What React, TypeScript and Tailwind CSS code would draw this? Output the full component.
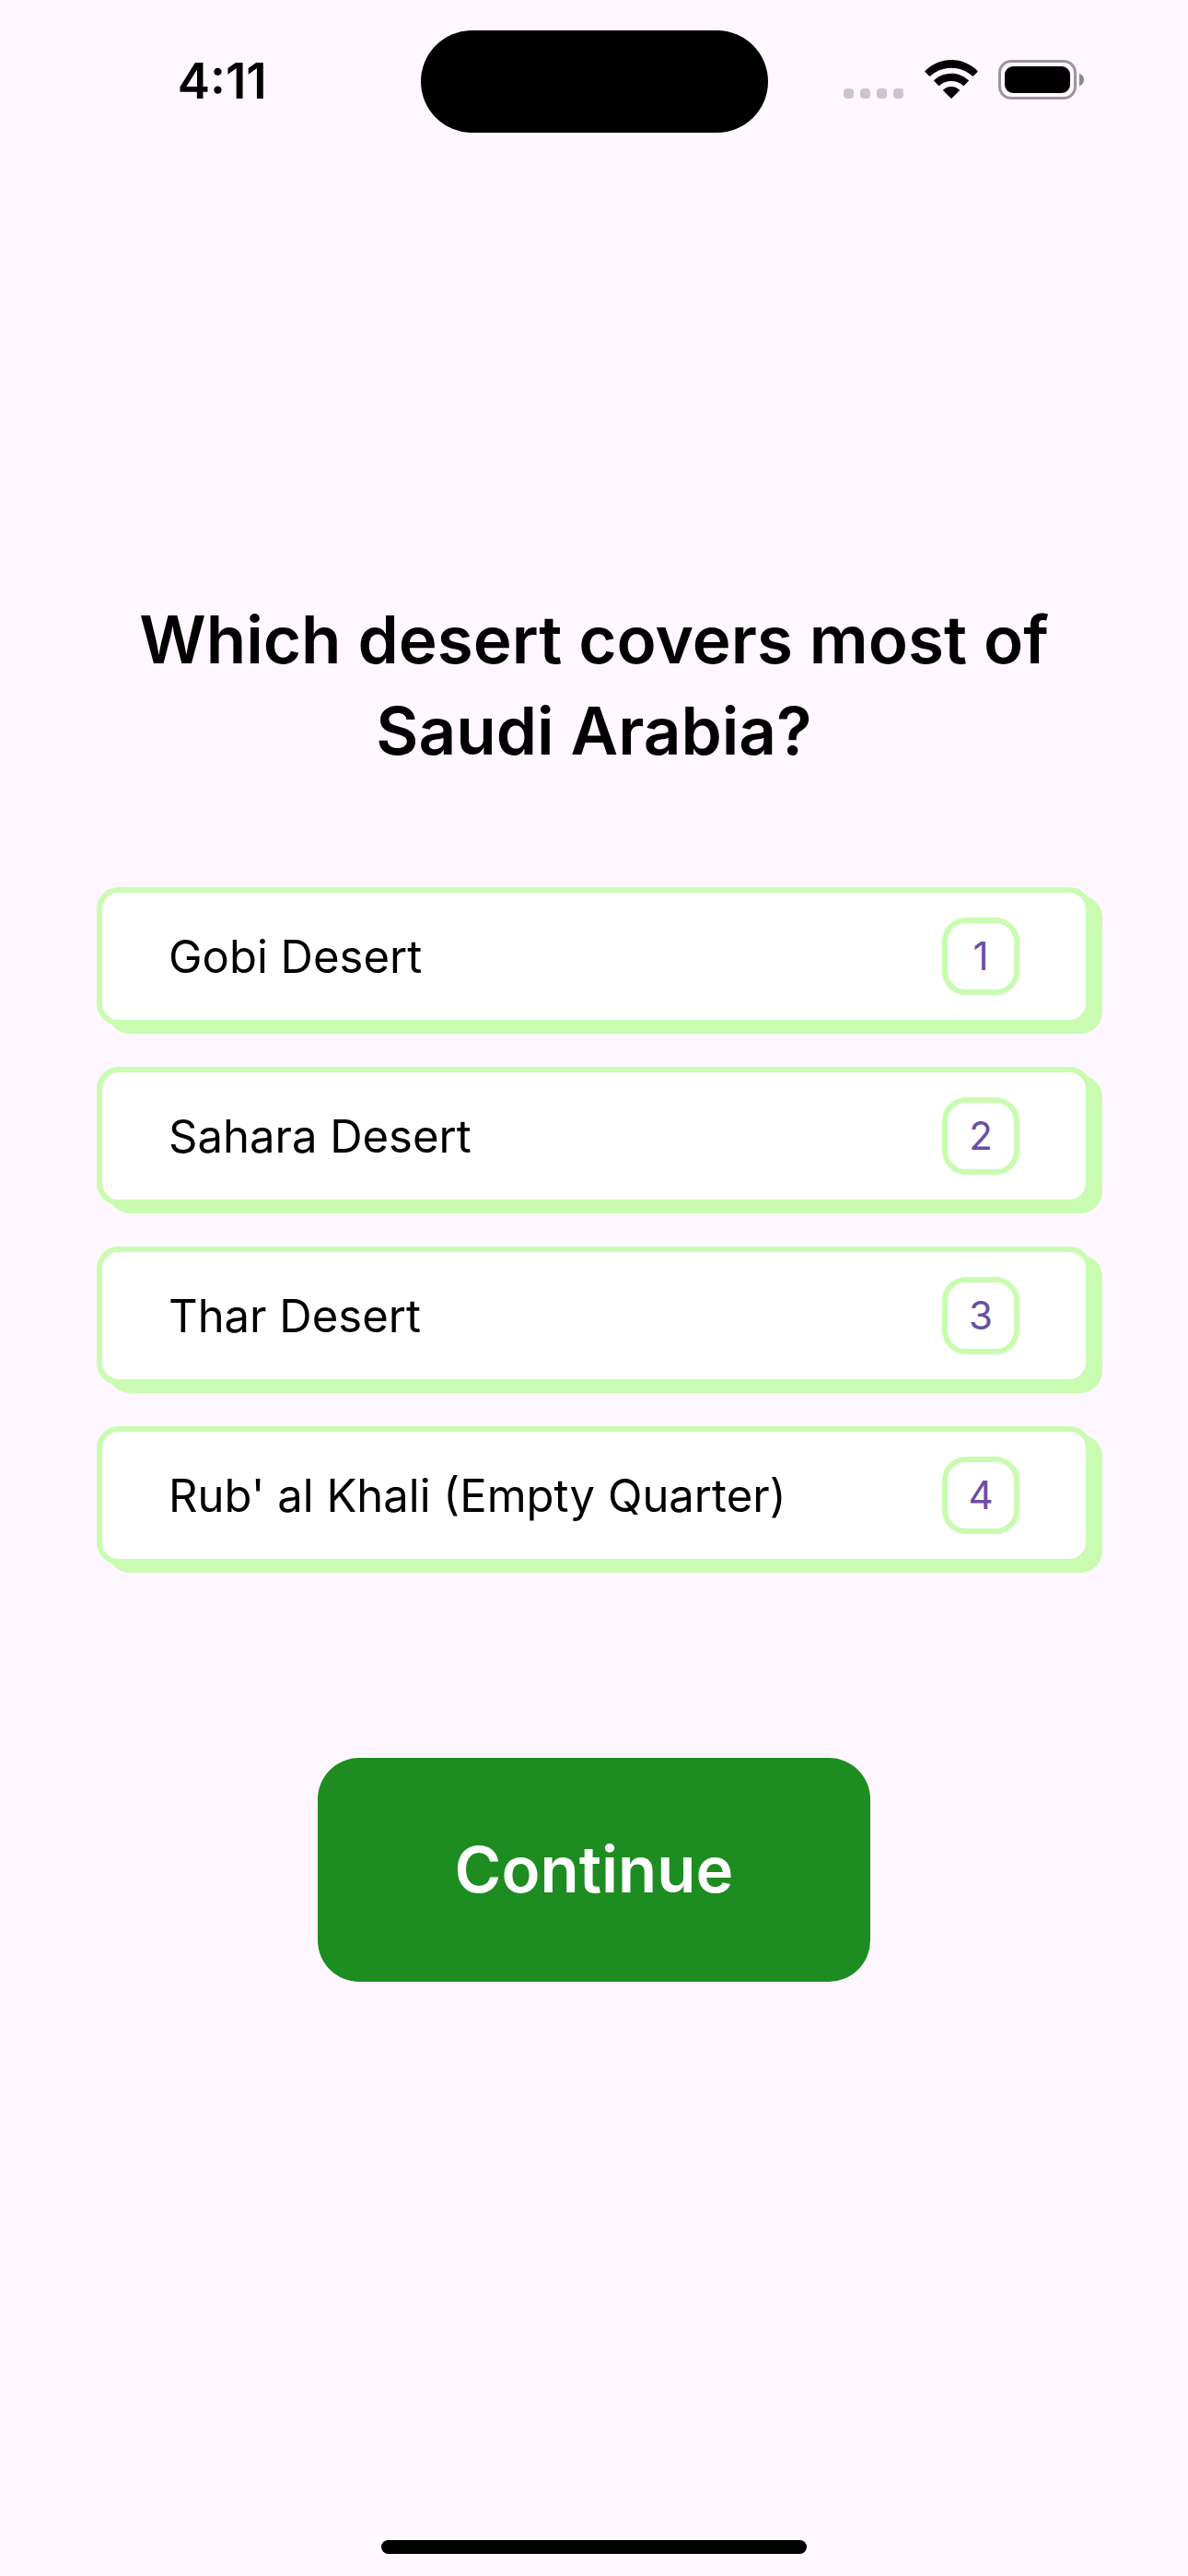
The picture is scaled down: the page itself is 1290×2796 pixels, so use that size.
const options = [
  "Gobi Desert",
  "Sahara Desert",
  "Thar Desert",
  "Rub' al Khali (Empty Quarter)",
];

function CellularDots() {
  return (
    <div className="flex gap-[7px] pt-[31px]" aria-hidden="true">
      {[0, 1, 2, 3].map((dot) => (
        <span key={dot} className="size-[11px] rounded-[4px] bg-[#cbc5cc]" />
      ))}
    </div>
  );
}

function WifiIcon() {
  return (
    <svg width="58" height="43" viewBox="0 0 58 43" aria-label="Wi-Fi">
      <path d="M29 0C40 0 50 4.500 57.500 12Q58 12.500 57.500 13L53 17.500Q52.300 18 51.800 17.500C45.500 12 37.500 8.800 29 8.800S12.500 12 6.200 17.500Q5.700 18 5 17.500L.5 13Q0 12.500.5 12C8 4.500 18 0 29 0Z" />
      <path d="M29 14.700C36.300 14.700 42.600 17.300 47.600 22Q48.200 22.500 47.600 23L43 27.800Q42.400 28.300 41.800 27.800C38.300 24.700 34 23 29 23S19.700 24.700 16.200 27.800Q15.600 28.300 15 27.800L10.400 23Q9.800 22.500 10.400 22C15.400 17.300 21.700 14.700 29 14.700Z" />
      <path d="M29 29C32.200 29 35.200 30.200 37.600 32.300Q38.100 32.800 37.600 33.400L29.600 41.500Q29 42 28.400 41.500L20.400 33.400Q19.900 32.800 20.400 32.300C22.800 30.200 25.800 29 29 29Z" />
    </svg>
  );
}

function BatteryIcon() {
  return (
    <svg width="93" height="43" viewBox="0 0 93 43" aria-label="Battery full">
      <rect x="1.500" y="1.500" width="82" height="40" rx="12.500" fill="none" stroke="#9b959c" strokeWidth="3" />
      <rect x="7" y="7" width="71" height="29" rx="9" />
      <path d="M88 15C91.500 16 93 18.500 93 21.500S91.500 27 88 28.500Z" fill="#8d888e" />
    </svg>
  );
}

function StatusBar() {
  return (
    <header className="grid h-[177px] grid-cols-[1fr_377px_1fr] items-start pt-[33px]">
      <div className="flex h-[110px] items-center justify-center pl-[26px]">
        <time className="text-[53px] leading-none font-semibold">4:11</time>
      </div>
      <div className="h-[111px] rounded-full bg-black" />
      <div className="flex items-start justify-end pt-8 pr-[113px]">
        <CellularDots />
        <div className="ml-[23px]">
          <WifiIcon />
        </div>
        <div className="ml-[22px]">
          <BatteryIcon />
        </div>
      </div>
    </header>
  );
}

function AnswerOption({ label, number }: { label: string; number: number }) {
  return (
    <button
      type="button"
      className="flex h-[150px] w-full items-center justify-between rounded-3xl border-6 border-[#c9fcb0] bg-white px-18 text-left shadow-[12px_9px_0_0_#c9fcb0]"
    >
      <span className="text-[49px] leading-none">{label}</span>
      <span className="flex size-[84px] shrink-0 items-center justify-center rounded-[26px] border-6 border-[#c9fcb0] text-[42px] leading-none text-[#6750a4]">
        {number}
      </span>
    </button>
  );
}

export default function App() {
  return (
    <div className="flex min-h-screen flex-col bg-[#fef7ff] font-['Inter',sans-serif] text-black">
      <StatusBar />
      <main className="flex flex-1 flex-col items-center justify-center px-[105px]">
        <h1 className="text-center text-[71px] leading-[99px] font-semibold">
          Which desert covers most of Saudi Arabia?
        </h1>
        <div className="mt-30 flex w-full flex-col gap-[45px]">
          {options.map((label, index) => (
            <AnswerOption key={label} label={label} number={index + 1} />
          ))}
        </div>
        <button
          type="button"
          className="mt-[210px] min-w-[600px] rounded-[45px] bg-[#1d8c21] px-36 py-18 text-[69px] leading-[99px] font-semibold text-white"
        >
          Continue
        </button>
      </main>
      <footer className="flex h-[177px] items-end justify-center pb-6">
        <div className="h-[15px] w-[462px] rounded-full bg-black" />
      </footer>
    </div>
  );
}
